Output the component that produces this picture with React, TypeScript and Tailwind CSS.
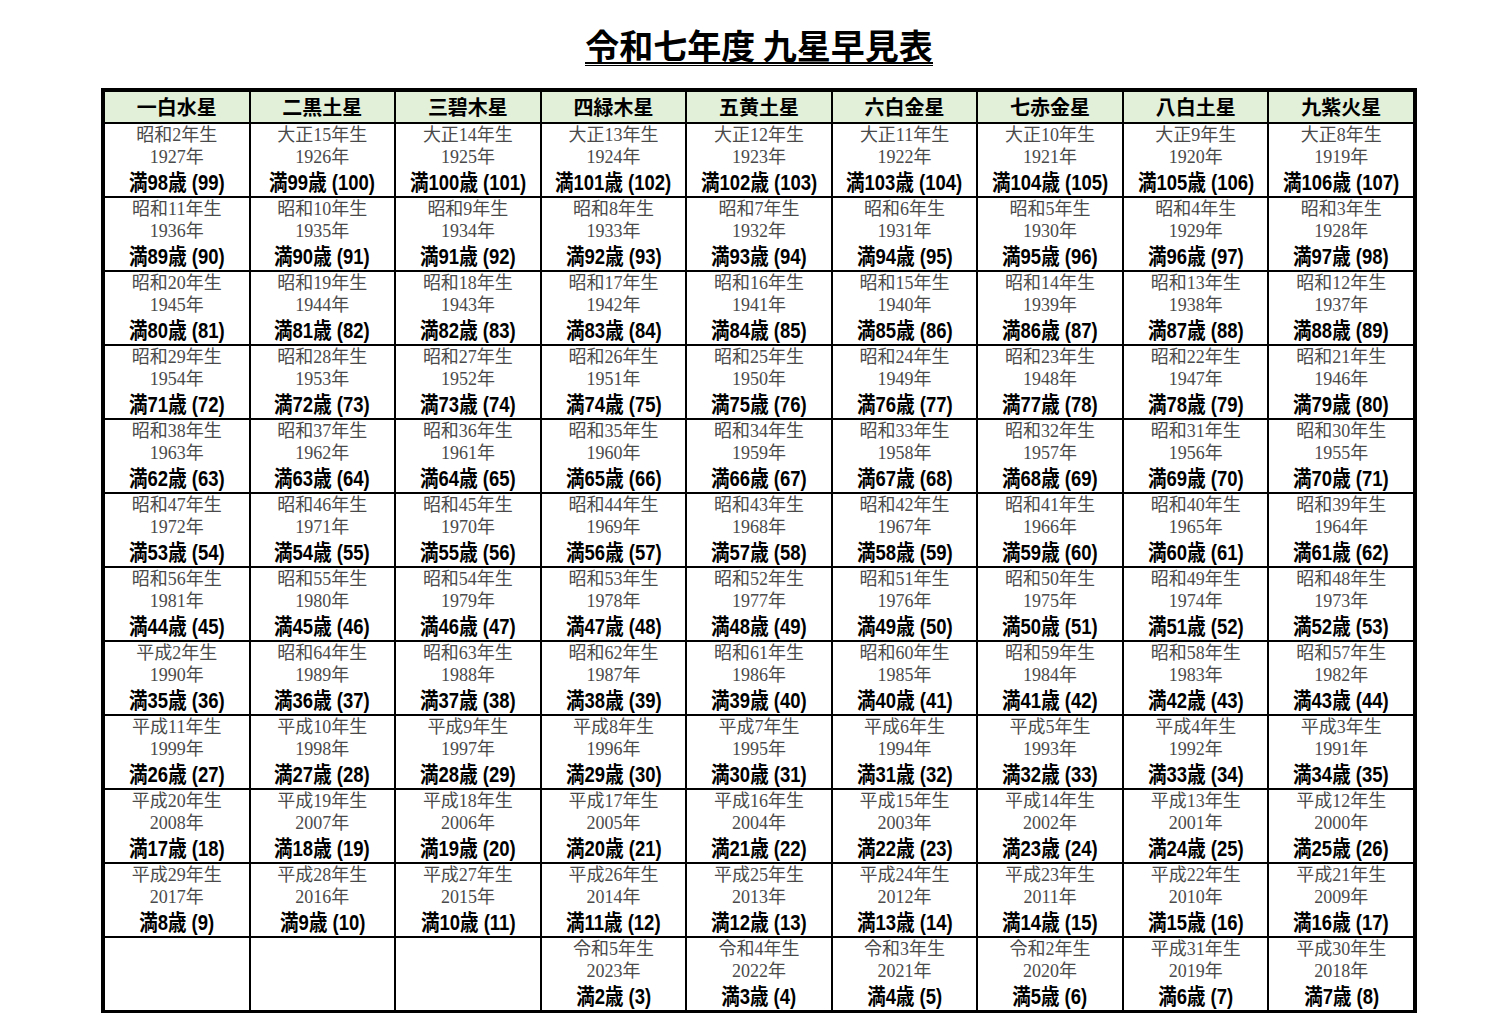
import React from "react";

const STARS = ["一白水星", "二黒土星", "三碧木星", "四緑木星", "五黄土星", "六白金星", "七赤金星", "八白土星", "九紫火星"];

function era(y: number): string {
  if (y <= 1926) return `大正${y - 1911}年生`;
  if (y <= 1989) return `昭和${y - 1925}年生`;
  if (y <= 2019) return `平成${y - 1988}年生`;
  return `令和${y - 2018}年生`;
}

const serif = { fontFamily: '"Liberation Serif", "Noto Sans CJK JP", serif' };
const sans = { fontFamily: '"Liberation Sans", "Noto Sans CJK JP", sans-serif' };

export default function App() {
  const rows = Array.from({ length: 12 }, (_, r) => r);
  return (
    <div className="w-[1496px] min-h-[1024px] bg-white" style={{ fontFamily: '"Noto Sans CJK JP", "Liberation Sans", sans-serif' }}>
      <div className="ml-[101px] w-[1316px] pt-[27px]">
        <div className="text-center h-[61px]">
          <span className="inline-block border-b-[1px] border-black pb-[1px]">
            <span className="inline-block border-b-[2px] border-black text-[34px] font-bold leading-[35px] text-black">
              令和七年度 九星早見表
            </span>
          </span>
        </div>
        <div className="border-[4px] border-b-[3px] border-black bg-black grid grid-cols-9 gap-[2px]">
          {STARS.map((s) => (
            <div key={s} className="h-[30px] bg-[#e2efd9] flex items-center justify-center text-[20px] font-bold text-black leading-none">
              {s}
            </div>
          ))}
          {rows.map((r) =>
            STARS.map((_, c) => {
              const y = 1927 + 9 * r - c;
              if (y > 2025 - 2) {
                return <div key={`${r}-${c}`} className="h-[72px] bg-white" />;
              }
              const age = 2025 - y;
              return (
                <div key={`${r}-${c}`} className="h-[72px] bg-white flex flex-col items-center text-[#4a4a4a]">
                  <div className="text-[18px] leading-[22px]" style={serif}>{era(y)}</div>
                  <div className="text-[18px] leading-[22px]" style={serif}>{y}年</div>
                  <div className="mt-[2px] text-[22px] leading-[26px] font-bold text-black whitespace-nowrap scale-x-[0.84]" style={sans}>
                    満{age}歳 ({age + 1})
                  </div>
                </div>
              );
            })
          )}
        </div>
      </div>
    </div>
  );
}
